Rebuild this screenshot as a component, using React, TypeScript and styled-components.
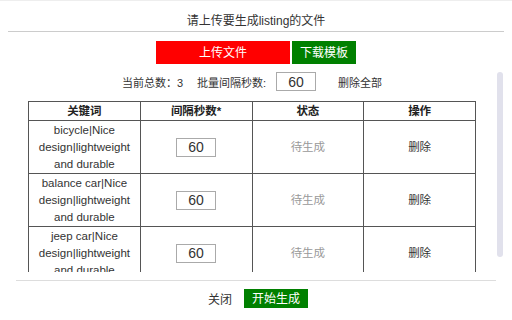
import styled, { createGlobalStyle } from "styled-components";

const GlobalStyle = createGlobalStyle`
  html, body {
    margin: 0;
    padding: 0;
    background: #fff;
  }
  body {
    font-family: "Liberation Sans", "Noto Sans CJK SC", sans-serif;
    font-size: 12px;
    color: #333;
  }
`;

type Row = { id: number; keyword: string; interval: number; status: string };

const rows: Row[] = [
  { id: 1, keyword: "bicycle|Nice design|lightweight and durable", interval: 60, status: "待生成" },
  { id: 2, keyword: "balance car|Nice design|lightweight and durable", interval: 60, status: "待生成" },
  { id: 3, keyword: "jeep car|Nice design|lightweight and durable", interval: 60, status: "待生成" },
];

export default function App() {
  return (
    <>
      <GlobalStyle />
      <Dialog>
        <Title>请上传要生成listing的文件</Title>

        <ActionBar>
          <ActionButton $variant="red" $width={134}>上传文件</ActionButton>
          <ActionButton $variant="green" $width={64}>下载模板</ActionButton>
        </ActionBar>

        <ScrollFrame>
          <ScrollArea>
            <CountRow>
              <CountLabel $gap={14}>当前总数：3</CountLabel>
              <CountLabel $gap={10}>批量间隔秒数:</CountLabel>
              <NumberInput defaultValue={60} />
              <LinkText>删除全部</LinkText>
            </CountRow>

            <Table>
              <thead>
                <tr>
                  <Th>关键词</Th>
                  <Th>间隔秒数*</Th>
                  <Th>状态</Th>
                  <Th>操作</Th>
                </tr>
              </thead>
              <tbody>
                {rows.map((row) => (
                  <tr key={row.id}>
                    <KeywordCell>{row.keyword}</KeywordCell>
                    <Td>
                      <NumberInput defaultValue={row.interval} />
                    </Td>
                    <Td $muted>{row.status}</Td>
                    <Td>删除</Td>
                  </tr>
                ))}
              </tbody>
            </Table>
          </ScrollArea>
          {/* headless screenshots hide native scrollbars, so draw the track */}
          <ScrollTrack>
            <ScrollThumb $height={185} />
          </ScrollTrack>
        </ScrollFrame>

        <Footer>
          <CloseButton>关闭</CloseButton>
          <ActionButton $variant="green" $width={64} $height={19}>开始生成</ActionButton>
        </Footer>
      </Dialog>
    </>
  );
}

const Dialog = styled.div`
  height: 320px;
  display: flex;
  flex-direction: column;
  border-top: 1px solid #eee;
  box-sizing: border-box;
  overflow: hidden;
`;

const Title = styled.div`
  height: 31px;
  margin: 0 8px;
  padding-top: 11px;
  box-sizing: border-box;
  line-height: 18px;
  text-align: center;
  border-bottom: 1px solid #ccc;
  color: #333;
`;

const ActionBar = styled.div`
  display: flex;
  justify-content: center;
  gap: 2px;
  margin-top: 9px;
`;

const ActionButton = styled.button<{
  $variant: "red" | "green";
  $width: number;
  $height?: number;
}>`
  width: ${(p) => p.$width}px;
  height: ${(p) => p.$height ?? 23}px;
  padding: 0;
  border: none;
  background: ${(p) => (p.$variant === "red" ? "#ff0000" : "#008000")};
  color: #fff;
  font-family: inherit;
  font-size: 12px;
  line-height: 1;
  cursor: pointer;
`;

const ScrollFrame = styled.div`
  flex: 1;
  min-height: 0;
  display: flex;
  margin: 4px 8px 0;
`;

const ScrollArea = styled.div`
  flex: 1;
  min-width: 0;
  overflow-y: auto;
  scrollbar-width: none;

  &::-webkit-scrollbar {
    display: none;
  }
`;

const ScrollTrack = styled.div`
  width: 8px;
  flex-shrink: 0;
  padding: 4px 1px 0;
  box-sizing: border-box;
`;

const ScrollThumb = styled.div<{ $height: number }>`
  height: ${(p) => p.$height}px;
  border-radius: 3px;
  background: #e1e1ec;
`;

const CountRow = styled.div`
  display: flex;
  align-items: center;
  justify-content: center;
  padding-top: 4px;
  font-size: 11px;
`;

const CountLabel = styled.span<{ $gap: number }>`
  margin-right: ${(p) => p.$gap}px;
  white-space: nowrap;
`;

const LinkText = styled.span`
  margin-left: 22px;
  cursor: pointer;
`;

const NumberInput = styled.input.attrs({ type: "text" })`
  width: 40px;
  height: 19px;
  box-sizing: border-box;
  padding: 0;
  border: 1px solid #aaa;
  text-align: center;
  font-family: "Liberation Sans", sans-serif;
  font-size: 14px;
  color: #333;
  outline: none;
`;

const Table = styled.table`
  width: 448px;
  margin: 10px auto 15px;
  border-collapse: collapse;
  table-layout: fixed;
  font-size: 11.5px;
`;

const Th = styled.th`
  border: 1px solid #555;
  height: 17px;
  padding: 1px 4px 0;
  line-height: 17px;
  font-weight: bold;
  color: #222;
`;

const Td = styled.td<{ $muted?: boolean }>`
  border: 1px solid #555;
  padding: 1px 4px 0;
  line-height: 17px;
  text-align: center;
  color: ${(p) => (p.$muted ? "#999" : "#333")};
`;

const KeywordCell = styled(Td)`
  padding: 1px 8px 0;
  height: 51px;
`;

const Footer = styled.div`
  display: flex;
  justify-content: center;
  align-items: flex-start;
  gap: 8px;
  height: 40px;
  margin: 8px 16px 0;
  padding-top: 8px;
  box-sizing: border-box;
  border-top: 1px solid #ddd;
`;

const CloseButton = styled.button`
  height: 19px;
  padding: 0 4px;
  border: none;
  background: none;
  font-family: inherit;
  font-size: 12px;
  color: #333;
  cursor: pointer;
`;
